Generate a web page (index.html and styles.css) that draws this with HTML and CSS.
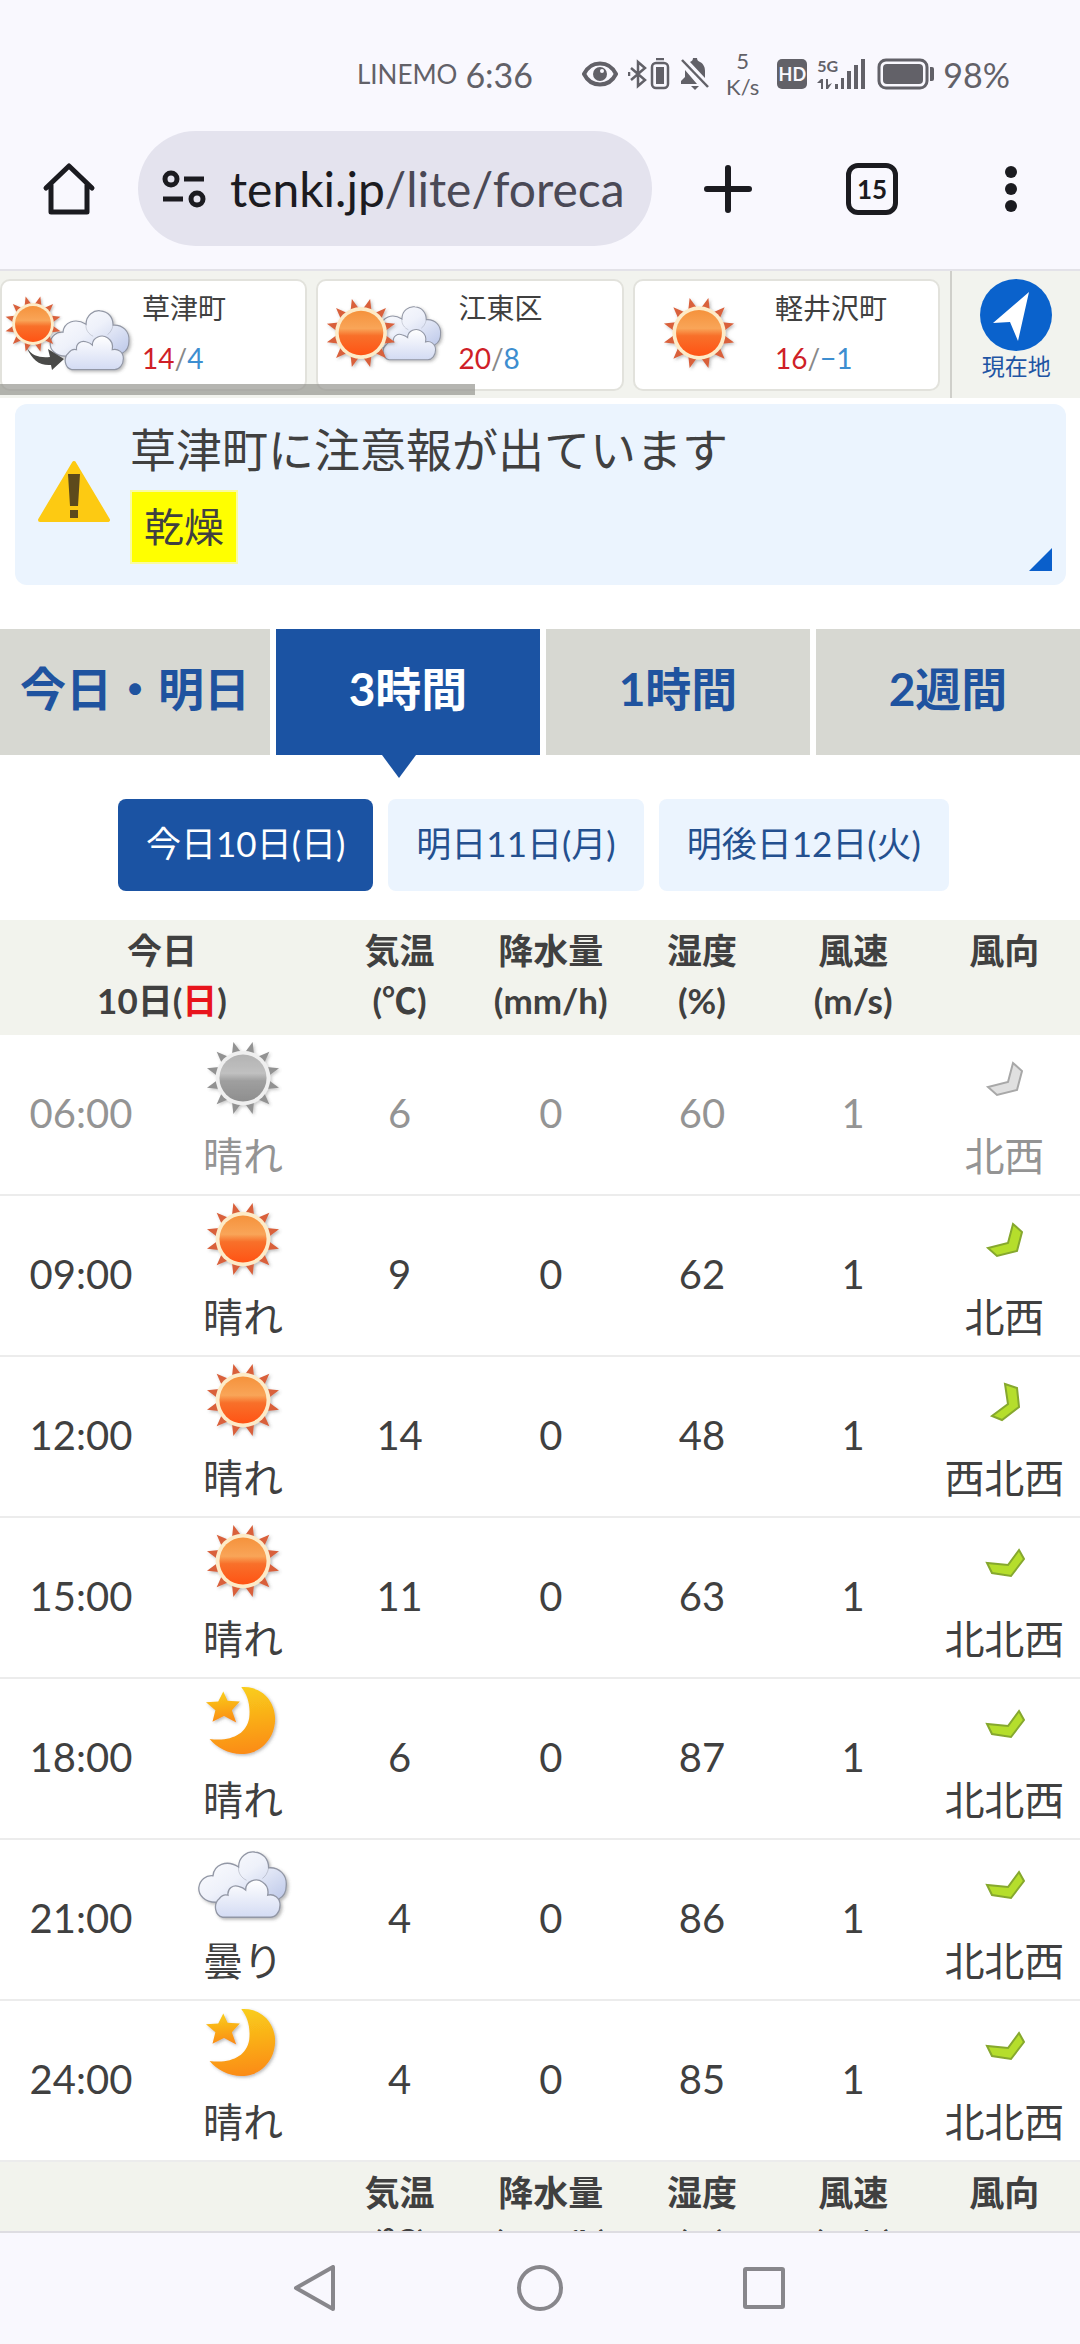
FILE: index.html
```html
<!DOCTYPE html>
<html lang="ja">
<head>
<meta charset="utf-8">
<meta name="viewport" content="width=device-width, initial-scale=1">
<title>草津町の3時間天気 - tenki.jp</title>
<link rel="stylesheet" href="styles.css">
</head>
<body>
<svg class="defs" aria-hidden="true">
  <defs>
    <linearGradient id="g-sun" x1="0" y1="0" x2="0" y2="1"><stop offset="0" stop-color="#f5923c"/><stop offset=".4" stop-color="#f9a558"/><stop offset=".56" stop-color="#f8702a"/><stop offset="1" stop-color="#ff5314"/></linearGradient>
    <linearGradient id="g-moon" x1="0.3" y1="0" x2=".4" y2="1"><stop offset="0" stop-color="#f9cf1c"/><stop offset="1" stop-color="#fb8c14"/></linearGradient>
    <linearGradient id="g-back" x1="0" y1="0" x2="1" y2="1"><stop offset="0" stop-color="#ffffff"/><stop offset=".45" stop-color="#eef1fa"/><stop offset="1" stop-color="#b3c0e6"/></linearGradient>
    <linearGradient id="g-front" x1="0" y1="0" x2="0" y2="1"><stop offset="0" stop-color="#ffffff"/><stop offset="1" stop-color="#d3dbf3"/></linearGradient>
    <filter id="soft" x="-20%" y="-20%" width="150%" height="150%"><feDropShadow dx="2" dy="2" stdDeviation="2" flood-color="#555" flood-opacity=".4"/></filter>
    <path id="ray" d="M50 1 L43 19 H57Z"/>
    <symbol id="sun" viewBox="0 0 100 100" overflow="visible">
      <g filter="url(#soft)">
        <g fill="#d9603a">
          <use href="#ray" transform="rotate(15 50 50)"/><use href="#ray" transform="rotate(45 50 50)"/><use href="#ray" transform="rotate(75 50 50)"/><use href="#ray" transform="rotate(105 50 50)"/><use href="#ray" transform="rotate(135 50 50)"/><use href="#ray" transform="rotate(165 50 50)"/><use href="#ray" transform="rotate(195 50 50)"/><use href="#ray" transform="rotate(225 50 50)"/><use href="#ray" transform="rotate(255 50 50)"/><use href="#ray" transform="rotate(285 50 50)"/><use href="#ray" transform="rotate(315 50 50)"/><use href="#ray" transform="rotate(345 50 50)"/>
        </g>
        <circle cx="50" cy="50" r="36" fill="#fdebc8"/>
      </g>
      <circle cx="50" cy="50" r="31" fill="url(#g-sun)"/>
    </symbol>
    <symbol id="cloud" viewBox="0 0 102 78" overflow="visible">
      <g filter="url(#soft)" stroke="#9297a5" stroke-width="1.5">
        <path fill="url(#g-back)" d="M20 58C8 58 0 50 1 41C2 33 9 27 17 28C18 16 32 9 46 18C46 6 56 0 64 1C74 2 80 9 80 19C92 18 101 27 100 39C100 48 96 52 92 54L88 66H26Z"/>
        <path fill="none" stroke-width="1" opacity=".5" d="M46 18C45 25 50 31 55 33M80 19C79 25 76 29 73 31"/>
        <path fill="url(#g-front)" d="M28 75C19 73 17 60 24 54C27 50 31 49 34 50C33 42 40 38 46 40C50 41 52 42 54 44C54 34 66 30 73 35C79 39 80 45 79 50C86 48 93 53 93 61C93 69 88 75 82 75Z"/>
      </g>
    </symbol>
    <symbol id="moon" viewBox="0 0 100 100" overflow="visible">
      <g filter="url(#soft)" fill="url(#g-moon)">
        <path d="M49 3C78 1 97 23 96 49C95 75 76 96 49 96C31 96 14 86 5 75C34 79 56 69 60 46C62 28 58 14 49 3Z"/>
        <path d="M24 9L30 22L47 23L36 35L42 52L25 43L9 51L13 35L0 24L17 23Z"/>
      </g>
    </symbol>
    <symbol id="wind-nw" viewBox="0 0 44 44"><path d="M31 6L40 14L35 33L15 38L6 30L26 25Z"/></symbol>
    <symbol id="wind-wnw" viewBox="0 0 44 44"><path d="M23 5L35 9L37 28L20 41L10 37L26 25Z"/></symbol>
    <symbol id="wind-nnw" viewBox="0 0 44 44"><path d="M37 10L42 19L29 36L10 33L5 23L26 25Z"/></symbol>
  </defs>
</svg>

<header class="status">
  <span class="carrier">LINEMO</span>
  <span class="clock">6:36</span>
  <svg class="st-eye" viewBox="0 0 36 26" width="36" height="26"><path fill="none" stroke="currentColor" stroke-width="4" d="M2 13C9-1 27-1 34 13C27 27 9 27 2 13Z"/><circle cx="18" cy="13" r="7" fill="currentColor"/><circle cx="20" cy="10" r="2" fill="#f9f8fe"/></svg>
  <svg viewBox="0 0 42 32" width="42" height="32" fill="none" stroke="currentColor" stroke-width="2.5"><path d="M3 10L17 22L10 28V4L17 10L3 22M1 14v4"/><rect x="24" y="5" width="16" height="25" rx="4"/><path d="M28 1h8"/><rect x="28" y="9" width="8" height="17" fill="currentColor" stroke="none"/></svg>
  <svg class="st-bell" viewBox="0 0 30 34" width="30" height="34"><path fill="currentColor" d="M1 27V24L5 20V13L17 27ZM10 5C12 4 13 3 13 1h4c0 2 1 3 3 4c4 2 5 6 5 9v7ZM11 29h8l-4 4Z"/><path stroke="currentColor" stroke-width="2.5" d="M2 3L28 30"/></svg>
  <span class="speed">5<br>K/s</span>
  <span class="hd">HD</span>
  <span class="signal">
    <span class="gen">5G</span>
    <svg viewBox="0 0 48 32" width="48" height="32" fill="currentColor"><path d="M0 25L4 21H6V31H4V25ZM9 21H11V27L15 25L11 31H9ZM18 26h3v5h-3zM24 20h3v11h-3zM30 13h4v18h-4zM37 7h4v24h-4zM44 1h4v30h-4z"/></svg>
  </span>
  <svg viewBox="0 0 58 32" width="58" height="32"><rect x="2" y="2" width="48" height="28" rx="7" fill="none" stroke="currentColor" stroke-width="3"/><rect x="6" y="6" width="40" height="20" rx="4" fill="currentColor"/><path fill="currentColor" d="M53 9h2q2 0 2 2v10q0 2-2 2h-2z"/></svg>
  <span class="clock">98%</span>
</header>

<nav class="toolbar" aria-label="ブラウザ">
  <button class="tool" aria-label="ホーム"><svg viewBox="0 0 54 54" width="54" height="54"><path fill="none" stroke="currentColor" stroke-width="5" stroke-linejoin="round" stroke-linecap="round" d="M4 26L27 4L50 26M9 23V50H45V23"/></svg></button>
  <button class="address"><svg viewBox="0 0 44 38" width="44" height="38" fill="none" stroke="currentColor" stroke-width="5"><circle cx="9" cy="9" r="6"/><path d="M22 9h20M1 29h20"/><circle cx="35" cy="29" r="6"/></svg><span class="url">tenki.jp<span class="path">/lite/foreca</span></span></button>
  <button class="tool tool-plus" aria-label="新しいタブ"><svg viewBox="0 0 48 48" width="48" height="48"><path stroke="currentColor" stroke-width="6" stroke-linecap="round" d="M24 3V45M3 24H45"/></svg></button>
  <button class="tool"><span class="tabs-count">15</span></button>
  <button class="tool tool-menu" aria-label="メニュー"><svg viewBox="0 0 14 48" width="14" height="48" fill="currentColor"><circle cx="7" cy="7" r="6"/><circle cx="7" cy="24" r="6"/><circle cx="7" cy="41" r="6"/></svg></button>
</nav>

<main class="page">
  <div class="places">
    <div class="place-list">
      <a class="place" href="#kusatsu">
        <svg viewBox="4 3 136 100" width="136" height="100"><use href="#cloud" x="51" y="32" width="82" height="62"/><use href="#sun" x="6" y="17" width="58" height="58"/><path fill="#4a4a48" d="M29 70C34 78 42 80 52 79L50 71L66 81L54 92L53 87C42 88 34 82 29 70Z"/></svg>
        <span class="place-text">草津町<span class="temps"><b>14</b>/<i>4</i></span></span>
      </a>
      <a class="place" href="#koto">
        <svg viewBox="2 0 136 100" width="136" height="100"><use href="#cloud" x="53" y="25" width="73" height="56"/><use href="#sun" x="9" y="16" width="72" height="72"/></svg>
        <span class="place-text">江東区<span class="temps"><b>20</b>/<i>8</i></span></span>
      </a>
      <a class="place" href="#karuizawa">
        <svg viewBox="2 0 136 100" width="136" height="100"><use href="#sun" x="29" y="15" width="74" height="74"/></svg>
        <span class="place-text">軽井沢町<span class="temps"><b>16</b>/<i>−1</i></span></span>
      </a>
      <span class="scroll-thumb"></span>
    </div>
    <a class="here" href="#here">
      <svg viewBox="0 0 72 72" width="72" height="72"><circle cx="36" cy="36" r="36" fill="#0a62cc"/><path fill="#fff" d="M49 13L38 62L30 43L13 44Z"/></svg>
      現在地
    </a>
  </div>

  <a class="alert" href="#alert">
    <svg viewBox="0 0 74 64" width="74" height="64"><path fill="#fdca12" stroke="#fdca12" stroke-width="4" stroke-linejoin="round" d="M37 3L71 60H3Z"/><path fill="#5d4a1c" d="M31 14H43L41 46H33ZM33 50h8v8h-8z"/></svg>
    <span class="alert-text">草津町に注意報が出ています<br><span class="alert-tag">乾燥</span></span>
    <span class="corner"></span>
  </a>

  <nav class="tabs" aria-label="予報の種類">
    <a href="#d">今日・明日</a>
    <a class="on" href="#h3">3時間</a>
    <a href="#h1">1時間</a>
    <a href="#w2">2週間</a>
  </nav>

  <nav class="days" aria-label="日付">
    <a class="on" href="#d10">今日10日(日)</a>
    <a href="#d11">明日11日(月)</a>
    <a href="#d12">明後日12日(火)</a>
  </nav>

  <table class="forecast">
    <colgroup><col class="c-wide"><col class="c-wide"><col span="5"></colgroup>
    <thead>
      <tr><th colspan="2">今日<br>10日(<span class="sunday">日</span>)</th><th>気温<br>(℃)</th><th>降水量<br>(mm/h)</th><th>湿度<br>(%)</th><th>風速<br>(m/s)</th><th>風向</th></tr>
    </thead>
    <tbody>
      <tr class="past"><td>06:00</td><td class="weather"><svg><use href="#sun" x="10" y="1" width="76" height="76"/></svg>晴れ</td><td>6</td><td>0</td><td>60</td><td>1</td><td class="wind"><svg><use href="#wind-nw"/></svg>北西</td></tr>
      <tr><td>09:00</td><td class="weather"><svg><use href="#sun" x="10" y="1" width="76" height="76"/></svg>晴れ</td><td>9</td><td>0</td><td>62</td><td>1</td><td class="wind"><svg><use href="#wind-nw"/></svg>北西</td></tr>
      <tr><td>12:00</td><td class="weather"><svg><use href="#sun" x="10" y="1" width="76" height="76"/></svg>晴れ</td><td>14</td><td>0</td><td>48</td><td>1</td><td class="wind"><svg><use href="#wind-wnw"/></svg>西北西</td></tr>
      <tr><td>15:00</td><td class="weather"><svg><use href="#sun" x="10" y="1" width="76" height="76"/></svg>晴れ</td><td>11</td><td>0</td><td>63</td><td>1</td><td class="wind"><svg><use href="#wind-nnw"/></svg>北北西</td></tr>
      <tr><td>18:00</td><td class="weather"><svg><use href="#moon" x="11" y="2" width="72" height="72"/></svg>晴れ</td><td>6</td><td>0</td><td>87</td><td>1</td><td class="wind"><svg><use href="#wind-nnw"/></svg>北北西</td></tr>
      <tr><td>21:00</td><td class="weather"><svg><use href="#cloud" x="3" y="7" width="90" height="69"/></svg>曇り</td><td>4</td><td>0</td><td>86</td><td>1</td><td class="wind"><svg><use href="#wind-nnw"/></svg>北北西</td></tr>
      <tr><td>24:00</td><td class="weather"><svg><use href="#moon" x="11" y="2" width="72" height="72"/></svg>晴れ</td><td>4</td><td>0</td><td>85</td><td>1</td><td class="wind"><svg><use href="#wind-nnw"/></svg>北北西</td></tr>
    </tbody>
    <tbody>
      <tr><th colspan="2"></th><th>気温<br>(℃)</th><th>降水量<br>(mm/h)</th><th>湿度<br>(%)</th><th>風速<br>(m/s)</th><th>風向</th></tr>
    </tbody>
  </table>
</main>

<footer class="sysnav">
  <button aria-label="戻る"><svg viewBox="0 0 46 46" width="46" height="46"><path d="M40 2V44L3 23Z"/></svg></button>
  <button aria-label="ホーム画面"><svg viewBox="0 0 46 46" width="46" height="46"><circle cx="23" cy="23" r="21"/></svg></button>
  <button aria-label="履歴"><svg viewBox="0 0 46 46" width="46" height="46"><rect x="4" y="4" width="38" height="38" rx="1"/></svg></button>
</footer>
</body>
</html>
```
FILE: styles.css
```css
* { box-sizing: border-box; }

body {
  margin: 0;
  height: 100vh;
  display: flex;
  flex-direction: column;
  overflow: hidden;
  background: #fff;
  color: #404040;
  font-family: Lato, "Noto Sans CJK JP", sans-serif;
}

a { color: inherit; text-decoration: none; }
svg { display: block; flex: none; }
button { border: 0; padding: 0; background: none; color: inherit; font: inherit; }
.defs { position: absolute; width: 0; height: 0; }

/* Status bar */
.status {
  flex: none;
  display: flex;
  align-items: center;
  justify-content: flex-end;
  gap: 8px;
  height: 131px;
  padding: 17px 70px 0 0;
  background: #f9f8fe;
  color: #626168;
}
.carrier { font-size: 26px; }
.clock { font-size: 34px; }
.st-eye { margin: 0 2px 0 41px; }
.st-bell { margin: 0 8px 0 2px; }
.speed { font-size: 22px; line-height: 26px; text-align: center; }
.hd {
  margin: 0 2px 0 10px;
  width: 30px;
  border-radius: 5px;
  background: #626168;
  color: #f9f8fe;
  font-size: 18px;
  font-weight: 700;
  line-height: 30px;
  text-align: center;
}
.signal { position: relative; margin-right: 4px; }
.gen { position: absolute; left: 0; top: 0; font-size: 16px; font-weight: 700; line-height: 16px; }

/* Browser toolbar */
.toolbar {
  flex: none;
  display: flex;
  align-items: flex-start;
  height: 140px;
  padding-left: 42px;
  border-bottom: 2px solid #e3e2e8;
  background: #f9f8fe;
  color: #1b1b20;
}
.tool { display: flex; align-items: center; height: 115px; }
.address {
  flex: 1;
  display: flex;
  align-items: center;
  gap: 24px;
  height: 115px;
  margin: 0 52px 0 42px;
  padding-left: 24px;
  border-radius: 58px;
  background: #e4e3ee;
  white-space: nowrap;
}
.url { font-size: 48px; }
.path { color: #4a4956; }
.tool-plus { margin-right: 94px; }
.tool-menu { margin: 0 62px 0 106px; }
.tabs-count {
  width: 52px;
  border: 5px solid currentColor;
  border-radius: 12px;
  font-size: 26px;
  font-weight: 700;
  line-height: 42px;
  text-align: center;
}

.page { flex: 1; min-height: 0; overflow: hidden; }

/* Saved places */
.places { display: flex; height: 127px; background: #f2f3ee; }
.place-list {
  flex: 1;
  position: relative;
  display: flex;
  align-items: flex-start;
  gap: 9px;
  padding: 8px 10px 0 0;
}
.place {
  flex: 1;
  display: flex;
  height: 112px;
  border: 2px solid #e2e2dc;
  border-radius: 10px;
  background: #fff;
}
.place-text { padding: 7px 0 0 4px; font-size: 28px; line-height: 40px; }
.temps { display: block; margin-top: 8px; line-height: 44px; color: #888; }
.temps b { font-weight: 400; color: #cf1f28; }
.temps i { font-style: normal; color: #3d8ed0; }
.scroll-thumb {
  position: absolute;
  left: 0;
  bottom: 3px;
  width: 50%;
  height: 11px;
  background: rgba(150, 150, 144, .7);
}
.here {
  flex: 0 0 12%;
  display: flex;
  flex-direction: column;
  align-items: center;
  padding-top: 8px;
  border-left: 2px solid #cfcfca;
  color: #1f55a4;
  font-size: 23px;
  line-height: 30px;
}

/* Warning */
.alert {
  position: relative;
  display: flex;
  align-items: center;
  gap: 19px;
  margin: 6px 14px 0 15px;
  padding: 16px 22px 21px;
  border-radius: 12px;
  background: #ebf4fe;
  font-size: 46px;
  line-height: 60px;
}
.alert-tag {
  display: inline-block;
  margin-top: 10px;
  padding: 0 12px;
  border: 2px solid #f9fba0;
  background: #ff0;
  font-size: 40px;
  line-height: 70px;
}
.corner {
  position: absolute;
  right: 14px;
  bottom: 14px;
  border-left: 23px solid transparent;
  border-bottom: 23px solid #0a5fcb;
}

/* Forecast type tabs */
.tabs { display: grid; grid-template-columns: 25% repeat(3, 1fr); gap: 6px; margin-top: 44px; }
.tabs a {
  position: relative;
  padding-bottom: 6px;
  background: #d7d8d2;
  color: #1f539f;
  font-size: 46px;
  font-weight: 700;
  line-height: 120px;
  text-align: center;
  white-space: nowrap;
}
.tabs .on { background: #1b53a3; color: #fff; }
.tabs .on::after {
  content: "";
  position: absolute;
  left: 40%;
  top: 100%;
  border: 17px solid transparent;
  border-top: 23px solid #1b53a3;
  border-bottom: 0;
}

/* Day links */
.days { display: flex; justify-content: center; gap: 15px; margin: 44px 13px 29px 0; }
.days a {
  padding: 0 28px 4px;
  border-radius: 8px;
  background: #ebf4fe;
  color: #24508f;
  font-size: 35px;
  line-height: 88px;
}
.days .on { background: #1b53a3; color: #fff; }

/* Forecast table */
.forecast { width: 100%; border-collapse: separate; border-spacing: 0; table-layout: fixed; text-align: center; }
.c-wide { width: 15%; }
.forecast th {
  height: 115px;
  padding: 5px 0 10px;
  background: #f2f3ed;
  font-size: 35px;
  font-weight: 700;
  line-height: 50px;
  vertical-align: top;
}
.sunday { color: #e8141c; }
.forecast td {
  height: 161px;
  padding: 0 0 4px;
  border-bottom: 2px solid #ececec;
  font-size: 40px;
  line-height: 58px;
  white-space: nowrap;
}
.forecast .weather, .forecast .wind { vertical-align: top; }
.weather svg { width: 96px; height: 88px; margin: 4px auto 0; overflow: visible; }
.wind svg { width: 44px; height: 44px; margin: 22px auto 26px; fill: #b5de2c; stroke: #86a82e; stroke-width: 2; }
.past { color: #949494; }
.past .weather svg { filter: grayscale(1); opacity: .8; }
.past .wind svg { fill: #e0e0e0; stroke: #a8a8a8; }

/* System navigation */
.sysnav {
  flex: none;
  display: flex;
  justify-content: center;
  gap: 178px;
  height: 113px;
  padding-top: 32px;
  border-top: 2px solid #dedde2;
  background: #f9f8fe;
}
.sysnav button { height: 46px; }
.sysnav svg { fill: none; stroke: #88878c; stroke-width: 4; stroke-linejoin: round; }
```
